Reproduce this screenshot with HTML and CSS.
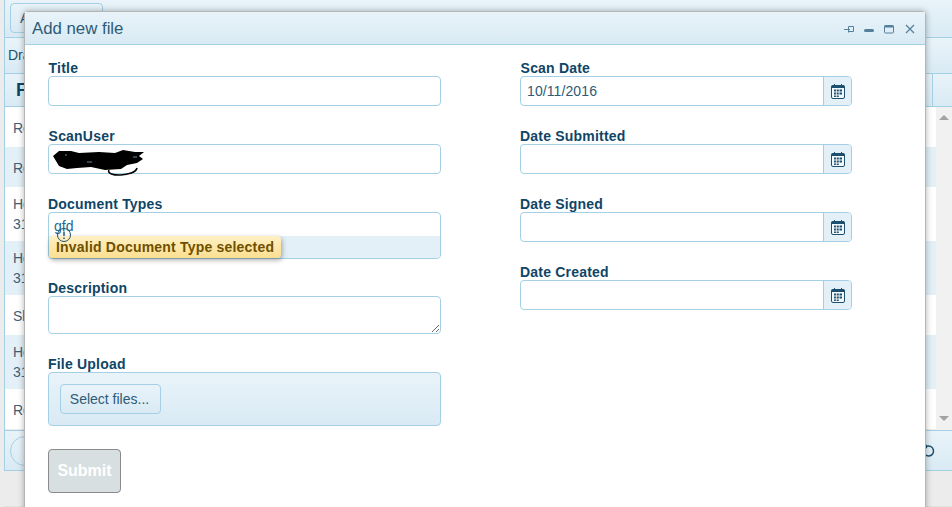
FILE: index.html
```html
<!DOCTYPE html>
<html lang="en">
<head>
    <title>Add new file</title>
    <link rel="stylesheet" href="styles.css">
</head>
<body>

    <svg class="sprites" width="0" height="0">
        <symbol id="cal" viewBox="0 0 14 15">
            <path d="M3.5 0v2.5M10.5 0v2.5" stroke="#1d4f6e" stroke-width="1" fill="none"/>
            <rect x="0.5" y="1.5" width="13" height="13" rx="1.5" fill="#f4f9fc" stroke="#1d4f6e"/>
            <rect x="0.5" y="1.5" width="13" height="2.5" fill="#1d4f6e"/>
            <path d="M3 5.5h8v2h-8zM3 8.5h8v2h-8zM3 11.5h5v1.5h-5z" fill="#1d4f6e"/>
            <path d="M5.4 5v8.5M8.2 5v8.5" stroke="#f4f9fc" stroke-width="0.8"/>
        </symbol>
    </svg>

    <div class="grid">
        <div class="toolbar"><button class="btn">Add new file</button></div>
        <div class="groupbar">Drag a column header here</div>
        <div class="headrow">
            <div class="headcell">File Name</div>
            <div class="headend"></div>
        </div>
        <div class="gridbody">
            <div class="rows">
                <div class="row">Report</div>
                <div class="row alt">Report</div>
                <div class="row tall">Health<br>31</div>
                <div class="row tall alt">Health<br>31</div>
                <div class="row">Slip</div>
                <div class="row tall alt">Health<br>31</div>
                <div class="row">Report</div>
            </div>
            <div class="scrollbar">
                <span class="arrow up"></span>
                <span class="arrow down"></span>
            </div>
        </div>
        <div class="pager">
            <span class="pagebtn"></span>
            <svg class="refresh" width="14" height="14" viewBox="0 0 14 14">
                <path d="M4.2 2.6a5 5 0 1 1-2.6 3.6" fill="none" stroke="#1d4f6e" stroke-width="1.5"/>
                <path d="M1 2.4l4-2v4z" fill="#1d4f6e"/>
            </svg>
        </div>
    </div>
    <div class="pageline"></div>

    <div class="window">
        <div class="titlebar">
            <span class="wintitle">Add new file</span>
            <div class="winactions">
                <svg width="10" height="10" viewBox="0 0 10 10">
                    <path d="M0 5.5h6M4.5 2.5v6M4.5 2.5h5v5h-5" fill="none" stroke="#54809c" stroke-width="1"/>
                </svg>
                <svg width="10" height="10" viewBox="0 0 10 10">
                    <rect x="0" y="5" width="10" height="3" rx="1.5" fill="#54809c"/>
                </svg>
                <svg width="10" height="10" viewBox="0 0 10 10">
                    <rect x="0.5" y="1.5" width="9" height="7.5" rx="1" fill="none" stroke="#54809c"/>
                    <rect x="0.5" y="1.5" width="9" height="2" fill="#54809c"/>
                </svg>
                <svg class="closeicon" width="10" height="10" viewBox="0 0 10 10">
                    <path d="M1 1l8 8M9 1l-8 8" fill="none" stroke="#54809c" stroke-width="1.2"/>
                </svg>
            </div>
        </div>

        <form class="winbody">
            <div class="col">
                <div class="field f-title">
                    <label class="nudge">Title</label>
                    <div class="textbox"></div>
                </div>
                <div class="field f-user">
                    <label class="nudge">ScanUser</label>
                    <div class="textbox">
                        <svg class="scribble" width="100" height="32" viewBox="0 0 100 32">
                            <path d="M4 10L10 5L22 5L30 7L50 6L66 7L74 4L86 6L95 6L90 10L94 13L88 17L78 19L72 23L56 24L42 21L28 22L18 23L10 20L7 15Z" fill="#000"/>
                            <path d="M60 24c-4 7 26 7 28-2" fill="none" stroke="#000" stroke-width="1.6"/>
                            <path d="M16 9h2M38 16h5M84 11h4" stroke="#7fa9c4" stroke-width="0.8"/>
                        </svg>
                    </div>
                </div>
                <div class="field f-types">
                    <label>Document Types</label>
                    <div class="combo">
                        <div class="combotext">gfd</div>
                        <div class="combolist"></div>
                        <div class="tooltip">Invalid Document Type selected</div>
                        <svg class="tipicon" width="16" height="16" viewBox="0 0 16 16">
                            <circle cx="8" cy="8" r="6.5" fill="none" stroke="#1d4f6e"/>
                            <path d="M8 4.5v4.5M8 10.5v1.5" stroke="#1d4f6e" stroke-width="1.4"/>
                        </svg>
                    </div>
                </div>
                <div class="field f-desc">
                    <label>Description</label>
                    <textarea class="area"></textarea>
                </div>
                <div class="field f-upload">
                    <label>File Upload</label>
                    <div class="upload"><button type="button" class="btn">Select files...</button></div>
                </div>
                <button type="button" class="submit">Submit</button>
            </div>

            <div class="col col-right">
                <div class="field f-date">
                    <label class="nudge">Scan Date</label>
                    <div class="datebox">
                        <div class="dateinput">10/11/2016</div>
                        <div class="datebtn"><svg width="14" height="15"><use href="#cal"/></svg></div>
                    </div>
                </div>
                <div class="field f-date">
                    <label>Date Submitted</label>
                    <div class="datebox">
                        <div class="dateinput"></div>
                        <div class="datebtn"><svg width="14" height="15"><use href="#cal"/></svg></div>
                    </div>
                </div>
                <div class="field f-date">
                    <label>Date Signed</label>
                    <div class="datebox">
                        <div class="dateinput"></div>
                        <div class="datebtn"><svg width="14" height="15"><use href="#cal"/></svg></div>
                    </div>
                </div>
                <div class="field f-date">
                    <label>Date Created</label>
                    <div class="datebox">
                        <div class="dateinput"></div>
                        <div class="datebtn"><svg width="14" height="15"><use href="#cal"/></svg></div>
                    </div>
                </div>
            </div>
        </form>
    </div>

</body>
</html>
```

FILE: styles.css
```css
* {
    box-sizing: border-box;
}

html, body {
    height: 100%;
}

body {
    margin: 0;
    padding-left: 4px;
    background: #ececec;
    color: #1d4f6e;
    font-family: "Liberation Sans", Arial, sans-serif;
    font-size: 14px;
    overflow: hidden;
}

.sprites {
    display: block;
    height: 0;
}

/* grid behind the window */
.grid {
    border-left: 1px solid #a3d0e4;
}

.toolbar {
    height: 38px;
    padding: 3px 5px;
    background: linear-gradient(#e9f3f9, #d9eaf4);
    border-bottom: 1px solid #a3d0e4;
}

.btn {
    height: 30px;
    padding: 0 9px;
    color: #2e5b76;
    font-family: inherit;
    font-size: 14px;
    white-space: nowrap;
    background: linear-gradient(#e9f3f9, #d9eaf4);
    border: 1px solid #a3d0e4;
    border-radius: 4px;
}

.toolbar .btn {
    width: 93px;
    text-align: left;
}

.groupbar {
    height: 36px;
    padding: 9px 3px;
    white-space: nowrap;
    overflow: hidden;
    background: linear-gradient(#e9f3f9, #d9eaf4);
    border-bottom: 1px solid #a3d0e4;
}

.headrow {
    display: flex;
    height: 33px;
    background: linear-gradient(#e9f3f9, #d9eaf4);
    border-bottom: 1px solid #a3d0e4;
}

.headcell {
    flex: 1;
    padding: 6px 11px;
    font-size: 18px;
    font-weight: bold;
    color: #0f4566;
}

.headend {
    width: 20px;
    border-left: 1px solid #a3d0e4;
}

.gridbody {
    display: flex;
    height: 323px;
}

.rows {
    flex: 1;
}

.row {
    height: 40px;
    padding: 11px 8px;
    background: #fff;
    color: #3f5f75;
    line-height: 20px;
    white-space: nowrap;
}

.row.alt {
    background: #e3f0f8;
}

.row.tall {
    height: 54px;
    padding: 7px 8px;
}

.scrollbar {
    position: relative;
    width: 16px;
    background: #f1f1f1;
}

.arrow {
    position: absolute;
    left: 3px;
    border-left: 5px solid transparent;
    border-right: 5px solid transparent;
}

.arrow.up {
    top: 8px;
    border-bottom: 5px solid #a3a3a3;
}

.arrow.down {
    bottom: 9px;
    border-top: 5px solid #a3a3a3;
}

.pager {
    display: flex;
    align-items: center;
    justify-content: space-between;
    height: 41px;
    padding: 0 16px 0 5px;
    background: linear-gradient(#e9f3f9, #d9eaf4);
    border-top: 1px solid #a3d0e4;
    border-bottom: 1px solid #a3d0e4;
}

.pagebtn {
    width: 30px;
    height: 30px;
    border: 1px solid #a3d0e4;
    border-radius: 50%;
}

.pageline {
    height: 2px;
    margin-top: 35px;
    background: #e2e2e2;
}

/* the modal */
.window {
    position: absolute;
    left: 24px;
    top: 11px;
    width: 902px;
    height: 520px;
    background: #fff;
    border: 1px solid #b5b5b5;
    border-radius: 4px 4px 0 0;
    box-shadow: 0 0 6px rgba(0, 0, 0, 0.3);
}

.titlebar {
    display: flex;
    align-items: center;
    justify-content: space-between;
    height: 33px;
    padding: 1px 10px 0 7px;
    background: linear-gradient(#e9f3f9, #d9eaf4);
    border-bottom: 1px solid #a3d0e4;
}

.wintitle {
    font-size: 16.8px;
    color: #2e5b76;
}

.winactions {
    display: flex;
    align-items: center;
    gap: 10px;
}

.closeicon {
    margin-left: 1px;
}

.winbody {
    display: flex;
    padding: 15px 0 0 23px;
}

.col {
    width: 393px;
}

.col-right {
    width: 332px;
    margin-left: 79px;
}

.field label {
    display: block;
    height: 16px;
    font-size: 14px;
    font-weight: bold;
    line-height: 16px;
    letter-spacing: 0.2px;
    color: #0f4566;
}

.field label.nudge {
    padding-left: 0.6px;
}

.textbox {
    position: relative;
    height: 30px;
    background: #fff;
    border: 1px solid #a3d0e4;
    border-radius: 4px;
}

.f-title, .f-user, .f-date {
    height: 68px;
}

.f-types {
    height: 84px;
}

.f-desc {
    height: 76px;
}

.f-upload {
    height: 93px;
}

.scribble {
    position: absolute;
    left: 0;
    top: 1px;
}

.combo {
    position: relative;
    height: 47px;
    border: 1px solid #a3d0e4;
    border-radius: 4px;
}

.combotext {
    height: 23px;
    padding: 5px 5px 0;
    font-size: 14px;
    line-height: 16px;
    color: #1d6a93;
}

.combolist {
    height: 22px;
    background: #e3f0f8;
    border-radius: 0 0 3px 3px;
}

.tipicon {
    position: absolute;
    left: 7px;
    top: 14px;
}

.tooltip {
    position: absolute;
    left: 0;
    top: 23px;
    height: 22px;
    padding: 1px 7px 0;
    font-size: 14px;
    font-weight: bold;
    line-height: 21px;
    letter-spacing: 0.2px;
    white-space: nowrap;
    color: #6e5000;
    background: linear-gradient(#fff0c4, #fbdf90);
    border-radius: 4px;
    box-shadow: 1px 2px 5px rgba(0, 0, 0, 0.35);
}

.area {
    display: block;
    width: 100%;
    height: 38px;
    border: 1px solid #a3d0e4;
    border-radius: 4px;
    outline: none;
}

.upload {
    height: 54px;
    padding: 11px;
    background: linear-gradient(#e9f3f9, #d9eaf4);
    border: 1px solid #a3d0e4;
    border-radius: 4px;
}

.upload .btn {
    width: 101px;
    padding: 0 2px 0 0;
}

.submit {
    display: block;
    width: 73px;
    height: 44px;
    padding: 0;
    font-family: inherit;
    font-size: 16px;
    font-weight: bold;
    color: #fff;
    background: #d8dfe1;
    border: 1px solid #8a8a8a;
    border-radius: 4px;
}

.datebox {
    display: flex;
    height: 30px;
    border: 1px solid #a3d0e4;
    border-radius: 4px;
}

.dateinput {
    flex: 1;
    padding: 0 6px;
    line-height: 28px;
    font-size: 14px;
    letter-spacing: 0.1px;
    color: #2e5b76;
}

.datebtn {
    display: flex;
    align-items: center;
    justify-content: center;
    width: 28px;
    background: #e3f0f8;
    border-left: 1px solid #a3d0e4;
    border-radius: 0 3px 3px 0;
}
```
